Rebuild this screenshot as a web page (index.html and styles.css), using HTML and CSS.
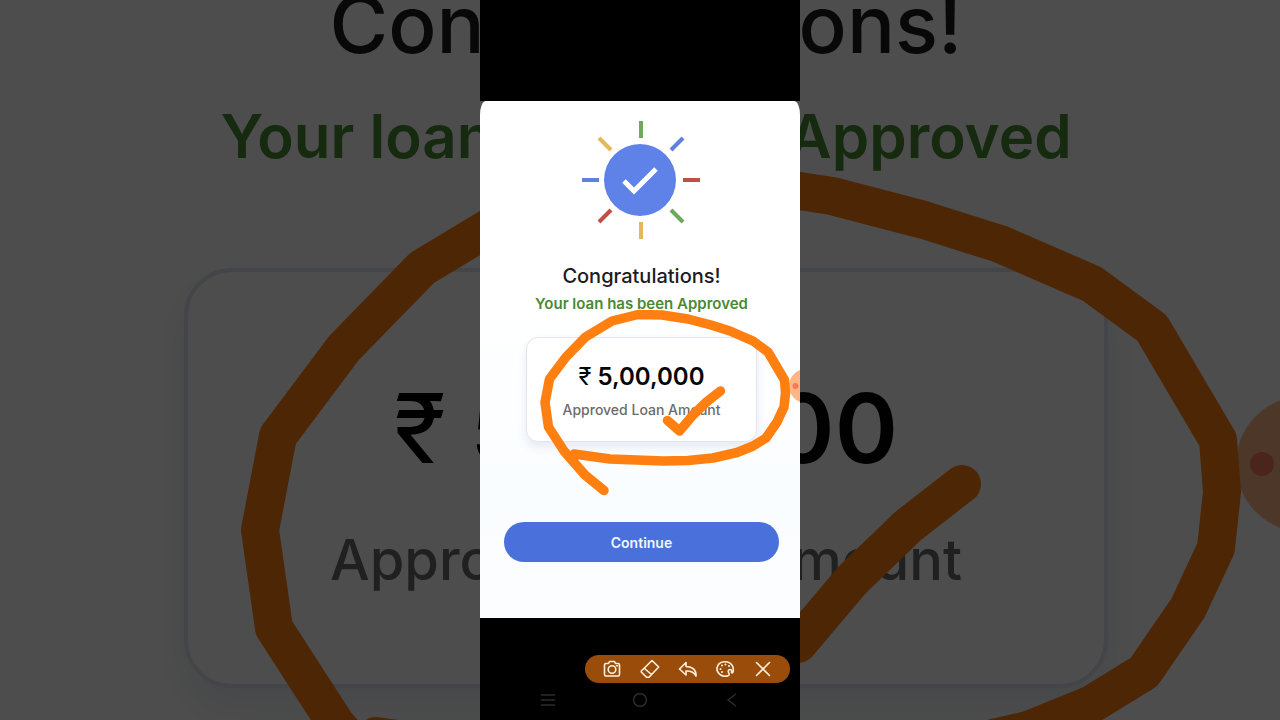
FILE: index.html
```
<!DOCTYPE html>
<html lang="en">
<head>
    <meta charset="UTF-8">
    <meta name="viewport" content="width=device-width, initial-scale=1.0">
    <title>Loan Approved</title>
    <link rel="stylesheet" href="styles.css">
</head>
<body>
    <svg class="defs" aria-hidden="true">
        <symbol id="marks" viewBox="0 0 320 720" overflow="visible">
            <circle cx="326" cy="386" r="17" fill="#ffb686"/>
            <circle cx="315.500" cy="386" r="3" fill="#f9795a"/>
            <g fill="none" stroke="#ff7f11" stroke-width="9.5" stroke-linecap="round" stroke-linejoin="round">
                <path d="M94 454 L130 459 L157 460 L183 461 L208 460.500 L233 458 L257 452.500 L273 446 L286 438 L297 422 L304 407 L305.500 393 L304.500 380 L288 352 L273 341 L250 331 L231 325 L208 319 L182 315 L158 314.500 L132 321 L105.500 337 L86 357 L69.500 379 L65 402.500 L68.500 427 L84 451 L105 475 L124 490.500"/>
                <path d="M187.500 420.500 L199.500 431 L213 415 L227 401.500 L240.500 391"/>
            </g>
        </symbol>
    </svg>

    <div class="backdrop" aria-hidden="true">
        <div class="content">
            <p class="title">Congratulations!</p>
            <p class="status">Your loan has been Approved</p>
            <div class="card">
                <p class="amount"><span class="rupee">₹</span> 5,00,000</p>
                <p class="label">Approved Loan Amount</p>
            </div>
        </div>
        <svg class="marks" viewBox="0 270 320 180"><use href="#marks" width="320" height="720"/></svg>
    </div>

    <main class="phone">
        <div class="screen">
            <div class="content">
                <svg class="sun" viewBox="0 0 120 118" aria-hidden="true">
                    <circle cx="58" cy="59" r="36" fill="#5f82e8"/>
                    <path d="M42 60 L52 70 L74 48" fill="none" stroke="#fff" stroke-width="5"/>
                    <g fill="none" stroke-width="4">
                        <path d="M59 0v17" stroke="#6ea75f"/>
                        <path d="M101 17 89 29" stroke="#5f82e0"/>
                        <path d="M101 59h17" stroke="#c24f45"/>
                        <path d="M89 89l12 12" stroke="#6ea75f"/>
                        <path d="M59 101v17" stroke="#e2b85a"/>
                        <path d="M29 89 17 101" stroke="#c24f45"/>
                        <path d="M0 59h17" stroke="#5f82e0"/>
                        <path d="M17 17l12 12" stroke="#e2b85a"/>
                    </g>
                </svg>
                <h1 class="title">Congratulations!</h1>
                <p class="status">Your loan has been Approved</p>
                <div class="card">
                    <p class="amount"><span class="rupee">₹</span> 5,00,000</p>
                    <p class="label">Approved Loan Amount</p>
                </div>
                <button class="continue" type="button">Continue</button>
            </div>
        </div>

        <div class="toolbar">
            <button type="button" aria-label="Screenshot">
                <svg viewBox="0 0 18 18"><path d="M5.500 3.500 6.500 1.500h5l1 2H15q1.500 0 1.500 1.500v9.500q0 1.500-1.500 1.500H3q-1.500 0-1.500-1.500V5Q1.500 3.500 3 3.500z"/><circle cx="9" cy="9.500" r="3.800"/><path d="M13.500 5.800h1"/></svg>
            </button>
            <button type="button" aria-label="Eraser">
                <svg viewBox="0 0 18 18"><path d="M11 .500 17.700 7 8 17.200H5.500L.300 12V11z M3.500 8.500l7 6"/></svg>
            </button>
            <button type="button" aria-label="Undo">
                <svg viewBox="0 0 18 18"><path d="M7 2.500.500 9 7 15v-4q7-.500 10 5 .500-9-10-9.500z"/></svg>
            </button>
            <button type="button" aria-label="Colors">
                <svg viewBox="0 0 18 18"><path d="M12.500 15.500Q8 17.500 4 14.500.500 11.500 1 8 2 2.500 8 1.800q7-.300 9 5.200.500 2 .200 4.500-.700 2-1.700 1 .500-3-1.500-3-2.500.500-1.500 3 1.500 2 0 3z"/><path class="dots" d="M4.500 9v.010M6 5.500v.010M9.500 4.500v.010M13 6v.010M6 12v.010"/></svg>
            </button>
            <button type="button" aria-label="Close">
                <svg viewBox="0 0 18 18"><path d="M2.500 2.500 15.500 15.500M15.500 2.500 2.500 15.500"/></svg>
            </button>
        </div>

        <nav class="navbar" aria-label="System">
            <button type="button" aria-label="Menu"><svg viewBox="0 0 16 16"><path d="M1 3h14M1 8h14M1 13h14"/></svg></button>
            <button type="button" aria-label="Home"><svg viewBox="0 0 16 16"><circle cx="8" cy="8" r="6.500"/></svg></button>
            <button type="button" aria-label="Back"><svg viewBox="0 0 16 16"><path d="M12 2 4 8l8 6"/></svg></button>
        </nav>

        <svg class="marks" viewBox="0 0 320 720" aria-hidden="true"><use href="#marks" width="320" height="720"/></svg>
    </main>
</body>
</html>
```
FILE: styles.css
```
* {
    box-sizing: border-box;
    margin: 0;
}
body {
    --s: 1;
    position: relative;
    display: flex;
    justify-content: center;
    min-height: 100vh;
    overflow: hidden;
    background: #000;
    font-family: Inter, "Noto Sans", sans-serif;
}
.defs {
    position: absolute;
    width: 0;
    height: 0;
}

/* enlarged, dimmed copy behind the phone */
.backdrop {
    --s: 4;
    position: absolute;
    inset: 0;
    overflow: hidden;
    background: #fff;
    opacity: 0.3;
}
.backdrop .content {
    margin-top: -28px;
}

.phone {
    position: relative;
    display: flex;
    flex-direction: column;
    width: 25%;
    min-width: 320px;
    padding-top: 101px;
    overflow: hidden;
    background: #000;
}
.marks {
    position: absolute;
    top: 0;
    left: 0;
    width: 100%;
    pointer-events: none;
}
.screen {
    background: linear-gradient(#55555a 50%, #000 50%);
}
.screen .content {
    padding-top: 20px;
    padding-bottom: 56px;
    border-radius: 6px 6px 0 0 / 14px 14px 0 0;
    background: linear-gradient(#fff 40%, #fafdff 75%, #fcfdff);
}
.content {
    display: flex;
    flex-direction: column;
    align-items: center;
    padding: 0 calc(21px * var(--s)) 0 calc(24px * var(--s));
    text-align: center;
    white-space: nowrap;
}
.sun {
    width: 120px;
    height: 118px;
    margin-bottom: 24px;
}
.title {
    color: #1c1c1e;
    font-size: calc(20px * var(--s));
    font-weight: 500;
    line-height: calc(26px * var(--s));
}
.status {
    margin-top: calc(3px * var(--s));
    color: #478a32;
    font-size: calc(15px * var(--s));
    font-weight: 600;
    line-height: calc(24px * var(--s));
}
.card {
    width: 84%;
    margin-top: calc(21px * var(--s));
    padding: calc(23px * var(--s)) 0 calc(20px * var(--s));
    border: calc(1px * var(--s)) solid #e2e4f2;
    border-radius: calc(12px * var(--s));
    background: #fff;
    box-shadow: 0 calc(5px * var(--s)) calc(10px * var(--s)) rgba(70, 100, 150, 0.12);
}
.amount {
    color: #050507;
    font-size: calc(24px * var(--s));
    font-weight: 600;
    line-height: calc(32px * var(--s));
}
.rupee {
    font-weight: 400;
}
.label {
    margin-top: calc(6px * var(--s));
    color: #6b6b6b;
    font-size: calc(14px * var(--s));
    font-weight: 500;
    line-height: calc(22px * var(--s));
}
.continue {
    width: 100%;
    height: 40px;
    margin-top: 80px;
    border: 0;
    border-radius: 20px;
    background: #4a70dc;
    color: #f1f5ff;
    font: 600 14px Inter, sans-serif;
}

.toolbar {
    display: flex;
    align-items: center;
    align-self: flex-end;
    justify-content: space-between;
    width: 64%;
    height: 28px;
    margin: 37px 10px 9px 0;
    padding: 0 18px;
    border-radius: 14px;
    background: #9a4d0b;
}
.toolbar button,
.navbar button {
    display: flex;
    padding: 0;
    border: 0;
    background: none;
}
.toolbar svg {
    width: 18px;
    height: 18px;
    overflow: visible;
    fill: none;
    stroke: #fff0dc;
    stroke-width: 1.6;
    stroke-linecap: round;
    stroke-linejoin: round;
}
.toolbar .dots {
    stroke-width: 2;
}
.navbar {
    display: flex;
    justify-content: space-between;
    padding: 0 60px;
}
.navbar svg {
    width: 16px;
    height: 16px;
    fill: none;
    stroke: #2b2b2b;
    stroke-width: 1.5;
}
```
